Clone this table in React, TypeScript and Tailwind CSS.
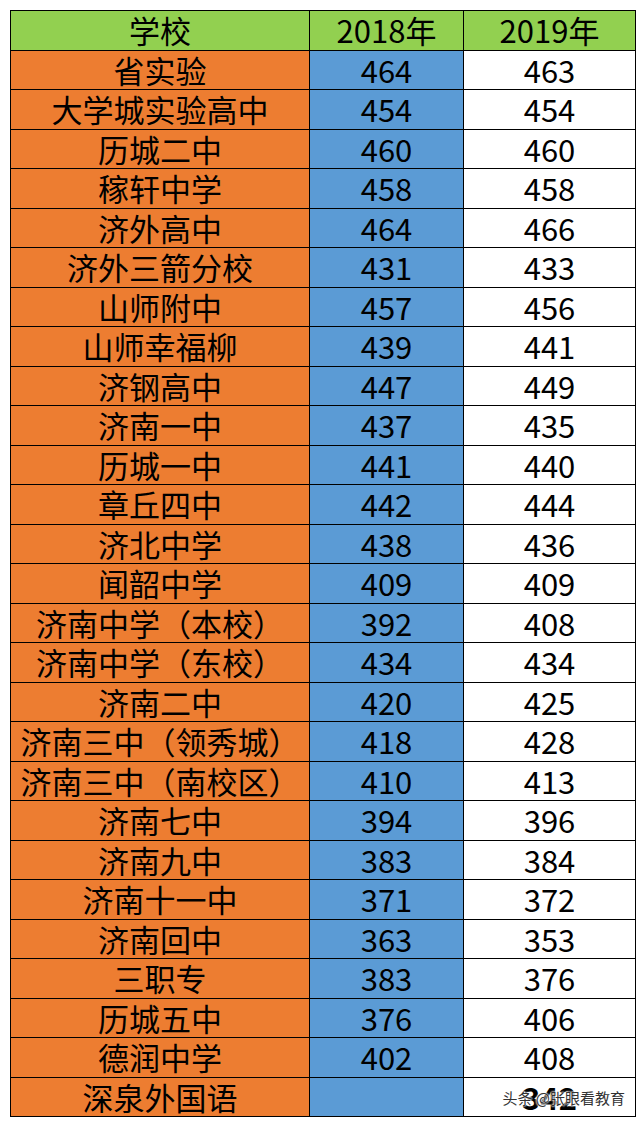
import React from "react";

const rows: [string, string, string][] = [
  ["省实验", "464", "463"],
  ["大学城实验高中", "454", "454"],
  ["历城二中", "460", "460"],
  ["稼轩中学", "458", "458"],
  ["济外高中", "464", "466"],
  ["济外三箭分校", "431", "433"],
  ["山师附中", "457", "456"],
  ["山师幸福柳", "439", "441"],
  ["济钢高中", "447", "449"],
  ["济南一中", "437", "435"],
  ["历城一中", "441", "440"],
  ["章丘四中", "442", "444"],
  ["济北中学", "438", "436"],
  ["闻韶中学", "409", "409"],
  ["济南中学（本校）", "392", "408"],
  ["济南中学（东校）", "434", "434"],
  ["济南二中", "420", "425"],
  ["济南三中（领秀城）", "418", "428"],
  ["济南三中（南校区）", "410", "413"],
  ["济南七中", "394", "396"],
  ["济南九中", "383", "384"],
  ["济南十一中", "371", "372"],
  ["济南回中", "363", "353"],
  ["三职专", "383", "376"],
  ["历城五中", "376", "406"],
  ["德润中学", "402", "408"],
  ["深泉外国语", "", "342"],
];

const cell =
  "h-[39.5px] flex items-center justify-center border-r border-b border-black leading-[36px] whitespace-nowrap";

export default function App() {
  return (
    <div className="w-[640px] h-[1124px] bg-white pt-[10px] pl-[10px] font-['Noto_Sans_CJK_SC',sans-serif] text-[31px] text-black">
      <div className="grid grid-cols-[299px_154px_172px] w-[626px] border-l border-t border-black">
        <div className={`${cell} bg-[#92d050]`}>学校</div>
        <div className={`${cell} bg-[#92d050]`}>2018年</div>
        <div className={`${cell} bg-[#92d050]`}>2019年</div>
        {rows.map(([name, a, b], i) => (
          <React.Fragment key={i}>
            <div className={`${cell} bg-[#ed7d31]`}>{name}</div>
            <div className={`${cell} bg-[#5b9bd5]`}>{a}</div>
            <div className={`${cell} bg-white relative`}>
              {i === rows.length - 1 ? (
                <>
                  <span className="font-bold">{b}</span>
                  <span className="absolute right-[10px] top-[12px] text-[15px] leading-[16px] text-[#333] [text-shadow:0_0_2px_#fff,0_0_2px_#fff,0_0_2px_#fff]">
                    头条 @张眼看教育
                  </span>
                </>
              ) : (
                b
              )}
            </div>
          </React.Fragment>
        ))}
      </div>
    </div>
  );
}
